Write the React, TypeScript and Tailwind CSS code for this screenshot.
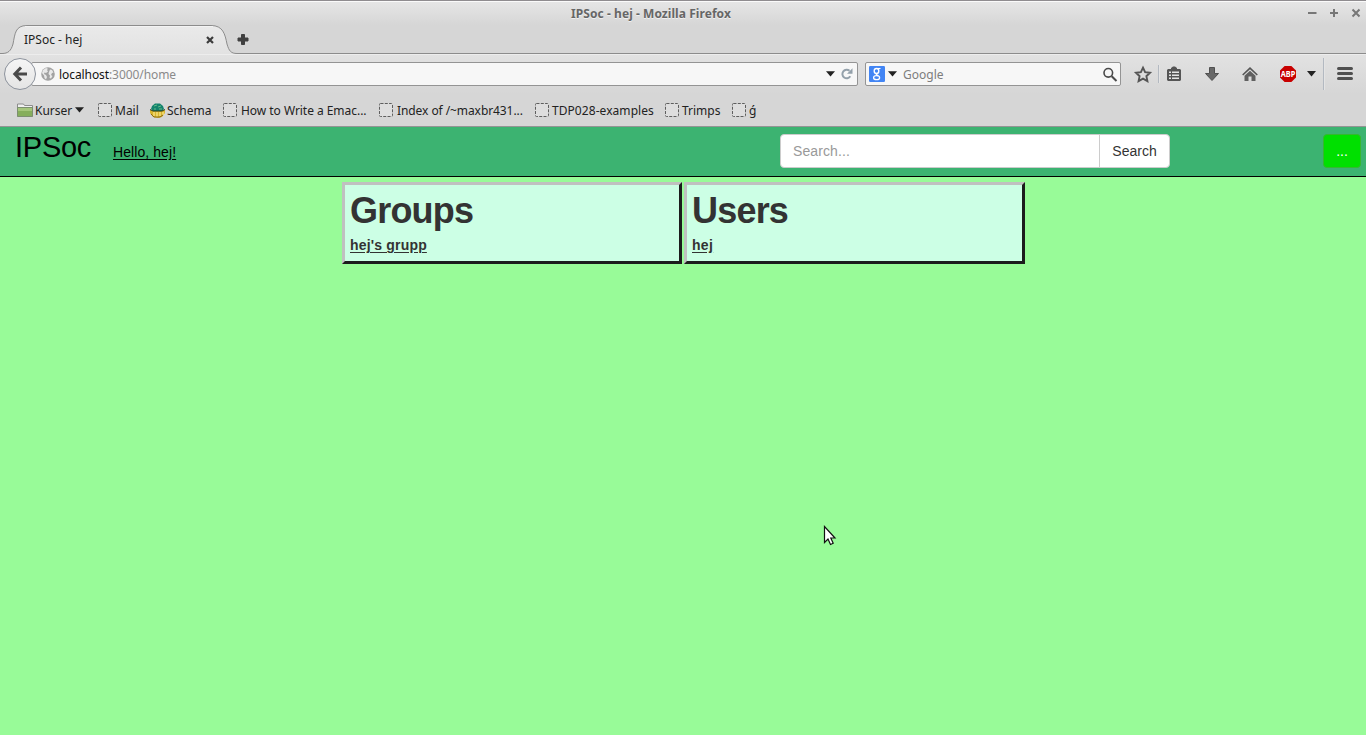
import type { ReactNode } from "react";

const ui = "font-['Noto_Sans',sans-serif] text-[12px] leading-[16px] whitespace-nowrap";

function Caret({ className = "" }: { className?: string }) {
  return (
    <svg className={`shrink-0 ${className}`} width="9" height="6" viewBox="0 0 9 6">
      <path d="M0 0.3h9L4.5 5.5z" fill="#222" />
    </svg>
  );
}

function TitleBar() {
  return (
    <div className="flex h-[25px] border-t border-[#8f8c8f] shadow-[inset_0_1px_0_#fafafa] bg-linear-to-b from-[#e6e6e6] to-[#d6d6d6]">
      <div className={`${ui} w-[1302px] pt-[5px] text-center font-bold text-[#666] [text-shadow:0_1px_0_#f0f0f0]`}>
        <span className="tracking-[0.06px]">IPSoc - hej - Mozilla Firefox</span>
      </div>
      <svg width="64" height="24" viewBox="0 0 64 24" fill="none" stroke="#777" strokeWidth="2">
        <path d="M6 12h8.500M28 12h8M32 8v8" />
        <path d="M50.500 8.500l7 7M57.500 8.500l-7 7" />
      </svg>
    </div>
  );
}

function TabStrip() {
  return (
    <div className="flex h-[29px] bg-[#d6d6d6]">
      <div className="grid w-[237px] shrink-0">
        <svg className="[grid-area:1/1]" width="237" height="29" viewBox="0 0 237 29">
          <defs>
            <linearGradient id="tab" x1="0" y1="0" x2="0" y2="1">
              <stop offset="0" stopColor="#eaeaea" />
              <stop offset="1" stopColor="#e2e2e2" />
            </linearGradient>
          </defs>
          <path d="M0 28.500H2C8 28.500 11 26 13 19C15 9 15 .5 27 .5H211C223 .5 225 9 227 19C229 26 231 28.500 237 28.500V29H0z" fill="url(#tab)" />
          <path d="M0 28.500H2C8 28.500 11 26 13 19C15 9 15 .5 27 .5H211C223 .5 225 9 227 19C229 26 231 28.500 237 28.500" fill="none" stroke="#8c8c8c" />
          <path d="M25 1.500H213" stroke="#f3f3f3" />
        </svg>
        <div className={`${ui} [grid-area:1/1] flex pt-[7px] pl-6 text-[#222]`}>
          <span className="w-[182px]">IPSoc - hej</span>
          <svg className="mt-[4px]" width="8" height="8" viewBox="0 0 8 8">
            <path d="M1 1l6 6M7 1L1 7" stroke="#3c3c3c" strokeWidth="2.200" />
          </svg>
        </div>
      </div>
      <div className="flex grow border-b border-[#8c8c8c]">
        <svg className="mt-[9px]" width="12" height="11" viewBox="0 0 12 11">
          <path d="M4.500 .5h3v3.500h3.500v3h-3.500v3.500h-3v-3.500H1v-3h3.500z" fill="#404040" stroke="#404040" strokeLinejoin="round" />
        </svg>
      </div>
    </div>
  );
}

function NavBar() {
  return (
    <div className="flex h-[40px] items-start bg-linear-to-b from-[#e2e2e2] to-[#d6d6d6] shadow-[inset_0_1px_0_#ededed]">
      <svg className="relative z-10 mt-[3px] ml-[3px] shrink-0" width="34" height="34" viewBox="0 0 34 34">
        <defs>
          <linearGradient id="back" x1="0" y1="0" x2="0" y2="1">
            <stop offset="0" stopColor="#f6f6f6" />
            <stop offset="1" stopColor="#e4e4e4" />
          </linearGradient>
        </defs>
        <circle cx="17" cy="17" r="15.500" fill="url(#back)" stroke="#8c929c" />
        <path d="M18 10.500L11.800 17l6.200 6.500M12.500 17h11.500" fill="none" stroke="#4a4a4a" strokeWidth="3" />
      </svg>
      <div className={`${ui} -ml-[6px] mt-[8px] flex h-[24px] w-[827px] shrink-0 items-center rounded-[2px] border border-[#949494] bg-[#f7f7f7]`}>
        <svg className="ml-[9px] shrink-0" width="14" height="14" viewBox="0 0 14 14">
          <circle cx="7" cy="7" r="6.800" fill="#a2a2a2" />
          <path d="M2 3l3-2 2 .8L6 3l1 1.500L5 6 3.500 5.500 3 7l2 1 1 2-1 2.500L3.500 11 3 8.500 1 6zM9 2.500l2 .5 1.500 2.500-1.500.5-1 2 1.500 1L10 11.500 8.500 11 9 8.500 7.500 7 8 5z" fill="#e9e9e9" />
        </svg>
        <span className="ml-[4px] w-[767px] shrink-0 pt-[2px] tracking-[-0.08px] text-[#8a8a8a]">
          <span className="text-[#111]">localhost</span>:3000/home
        </span>
        <Caret />
        <svg className="ml-[6px] shrink-0" width="12" height="12" viewBox="0 0 12 12">
          <path d="M9.300 8.300A4.300 4.300 0 1 1 8.500 2.700" fill="none" stroke="#93a0aa" strokeWidth="2" />
          <path d="M11.500 .2v5.600H6z" fill="#93a0aa" />
        </svg>
      </div>
      <div className={`${ui} ml-[7px] mt-[8px] flex h-[24px] w-[256px] shrink-0 items-center rounded-[2px] border border-[#949494] bg-[#f7f7f7]`}>
        <svg className="ml-[3px] shrink-0" width="16" height="16" viewBox="0 0 16 16">
          <rect width="16" height="16" rx="1.200" fill="#4285f4" />
          <g fill="none" stroke="#fff">
            <ellipse cx="7.500" cy="5" rx="2.300" ry="2.500" strokeWidth="1.400" />
            <path d="M7.500 2.500h4" strokeWidth="1.100" />
            <path d="M8 7.500c-1.500 1 0 1.500 1.300 2.400" strokeWidth="1.400" />
            <ellipse cx="7.600" cy="11.700" rx="3" ry="2" strokeWidth="1.300" />
          </g>
        </svg>
        <Caret className="ml-[3px]" />
        <span className="ml-[6px] w-[200px] shrink-0 pt-[2px] text-[#7d7d7d]">Google</span>
        <svg className="shrink-0" width="15" height="15" viewBox="0 0 15 15" fill="none">
          <circle cx="5.300" cy="5.800" r="4.300" stroke="#4a4a4a" strokeWidth="1.600" />
          <path d="M8.700 9.200l4.800 4.800" stroke="#4a4a4a" strokeWidth="2" />
        </svg>
      </div>
      <svg className="shrink-0" width="245" height="40" viewBox="1121 54 245 40">
        <path d="M1143 67.700l2.100 4.500 4.900.6-3.600 3.400 1 4.900-4.400-2.500-4.400 2.500 1-4.900-3.600-3.400 4.900-.6z" fill="none" stroke="#555" strokeWidth="1.900" />
        <path d="M1158.500 65v18M1323.500 58v32" stroke="#b3b9c1" />
        <path d="M1159.500 65v18M1324.500 58v32" stroke="#e4e4e4" />
        <path d="M1168 69h3v-1l2-1.500h2l2 1.500v1h3l1 1v10l-1 1h-12l-1-1V70z" fill="#555" />
        <path d="M1169 71.500h2v1.500h-2zM1172 71.500h7v1.500h-7zM1169 74.500h2v1.500h-2zM1172 74.500h7v1.500h-7zM1169 77.500h2v1.500h-2zM1172 77.500h7v1.500h-7z" fill="#e5e5e5" />
        <path d="M1209.500 67.500h5v6h4l-6.500 7-6.500-7h4z" fill="#686868" stroke="#505050" />
        <path d="M1242.700 75l7.300-6.800 7.300 6.800" fill="none" stroke="#555" strokeWidth="1.600" />
        <path d="M1244.500 75.800l5.500-5 5.500 5V81h-4v-4.500h-3V81h-4z" fill="#606060" />
        <path d="M1284.600 66h6.800l4.600 4.600v6.800l-4.600 4.600h-6.800l-4.600-4.600v-6.800z" fill="#c80000" />
        <text x="1288" y="77.300" textAnchor="middle" textLength="14.500" lengthAdjust="spacingAndGlyphs" fill="#fff" fontFamily="Noto Sans, sans-serif" fontWeight="bold" fontSize="9">ABP</text>
        <path d="M1307 71h9l-4.500 5.500z" fill="#222" />
        <path d="M1338.500 68.500h13M1338.500 73.500h13M1338.500 78.500h13" stroke="#505050" strokeWidth="3" strokeLinecap="round" />
      </svg>
    </div>
  );
}

function PageIcon() {
  return (
    <svg className="shrink-0" width="14" height="14" viewBox="0 0 14 14">
      <rect x=".5" y=".5" width="13" height="13" rx="1" fill="#dedede" stroke="#5e5e5e" strokeDasharray="3 1.300" />
    </svg>
  );
}

function Bookmark({ icon, label, width, gap = "gap-[3px]", text = "" }: { icon?: ReactNode; label: string; width: string; gap?: string; text?: string }) {
  return (
    <div className={`flex shrink-0 items-center ${gap} ${width}`}>
      {icon ?? <PageIcon />}
      <span className={`pt-[2px] ${text}`}>{label}</span>
    </div>
  );
}

function BookmarksBar() {
  return (
    <div className={`${ui} flex h-[33px] items-center border-b border-[#949494] bg-[#d6d6d6] pl-[17px] text-[#222]`}>
      <div className="flex w-[81px] shrink-0 items-center">
        <svg width="16" height="14" viewBox="0 0 16 14">
          <path d="M.5 13V1h6l1 1.500h8V13z" fill="#f0f0f0" stroke="#8c8c8c" />
          <path d="M.5 4.500h15v9H.5z" fill="#86ae5c" stroke="#7d8f70" />
          <path d="M1 5h14v3H1z" fill="#a5c67b" />
        </svg>
        <span className="ml-[2px] w-[40px] pt-[2px]">Kurser</span>
        <Caret />
      </div>
      <Bookmark label="Mail" width="w-[52px]" />
      <Bookmark
        label="Schema"
        width="w-[73px]"
        gap="gap-[2px]"
        icon={
          <svg width="15" height="15" viewBox="0 0 15 15">
            <path d="M0 7h15v3l-3 4-4 1-5-1-3-4z" fill="#d9b52c" />
            <path d="M1 6l1-3 3-2.500h5L13 3l1 3-2 2H3z" fill="#14836d" />
            <path d="M4 3l3-1M8 4l3-1M4 6h2M9 6h3" stroke="#62bc87" />
            <path d="M0 6.500l3 1.500h9l3-1.500" stroke="#273b26" fill="none" />
            <path d="M4 9v4M7 9v5M10 9v4M13 9v3" stroke="#fff2a0" />
            <path d="M1 11l3 3h6l3-2" stroke="#8b6c15" fill="none" />
          </svg>
        }
      />
      <Bookmark label="How to Write a Emac..." width="w-[156px]" gap="gap-[4px]" text="tracking-[-0.04px]" />
      <Bookmark label="Index of /~maxbr431..." width="w-[156px]" gap="gap-[4px]" text="tracking-[-0.08px]" />
      <Bookmark label="TDP028-examples" width="w-[130px]" text="tracking-[0.06px]" />
      <Bookmark label="Trimps" width="w-[67px]" />
      <Bookmark label="ǵ" width="w-[40px]" />
    </div>
  );
}

function SiteHeader() {
  return (
    <header className="flex h-[50px] items-start border-b border-black bg-[#3cb371] text-[14px] leading-[20px] text-black">
      <span className="w-[98px] pt-[4px] pl-[15px] text-[29px] leading-[33px] tracking-[-0.25px]">IPSoc</span>
      <a className="mt-[15px] ml-[15px] w-[667px] tracking-[0.08px] underline underline-offset-2">Hello, hej!</a>
      <div className="mt-[7px] flex h-[34px] w-[390px] rounded-[4px] border border-[#ccc] bg-white">
        <div className="w-[319px] border-r border-[#ccc] pt-[6px] pl-[12px] tracking-[0.1px] text-[#999]">Search...</div>
        <div className="grow pt-[6px] text-center text-[#333]">Search</div>
      </div>
      <button className="mt-[7px] ml-[153px] h-[34px] w-[38px] rounded-[4px] border border-[#35b82f] bg-[#00e000] text-white">...</button>
    </header>
  );
}

function Card({ title, link, className, linkSpacing }: { title: string; link: string; className: string; linkSpacing: string }) {
  return (
    <section className={`h-[82px] border-3 border-t-[#c0c0c0] border-r-[#1c1c1c] border-b-[#1c1c1c] border-l-[#c0c0c0] bg-[#ccffe5] pl-[5px] font-bold text-[#333] ${className}`}>
      <h1 className="pt-[6px] text-[36px] leading-[40px] tracking-[-0.8px]">{title}</h1>
      <a className={`mt-[4px] block text-[14px] leading-[20px] underline underline-offset-2 ${linkSpacing}`}>{link}</a>
    </section>
  );
}

export default function App() {
  return (
    <div className="flex h-[735px] w-[1366px] flex-col overflow-hidden bg-[#98fb98]">
      <TitleBar />
      <TabStrip />
      <NavBar />
      <BookmarksBar />
      <div className="grow font-['Liberation_Sans',sans-serif]">
        <SiteHeader />
        <main className="flex gap-[2px] pt-[5px] pl-[342px]">
          <Card title="Groups" link="hej's grupp" className="w-[340px]" linkSpacing="tracking-[0.18px]" />
          <Card title="Users" link="hej" className="w-[341px]" linkSpacing="tracking-[0.3px]" />
        </main>
      </div>
      <svg className="absolute top-[525px] left-[823px]" width="14" height="22" viewBox="0 0 14 22">
        <path d="M1.500 1.500v16l3.500-3.500 2.500 5.500 2.700-1.200L7.800 13H12z" fill="#fff" stroke="#111" strokeWidth="1.200" />
      </svg>
    </div>
  );
}
